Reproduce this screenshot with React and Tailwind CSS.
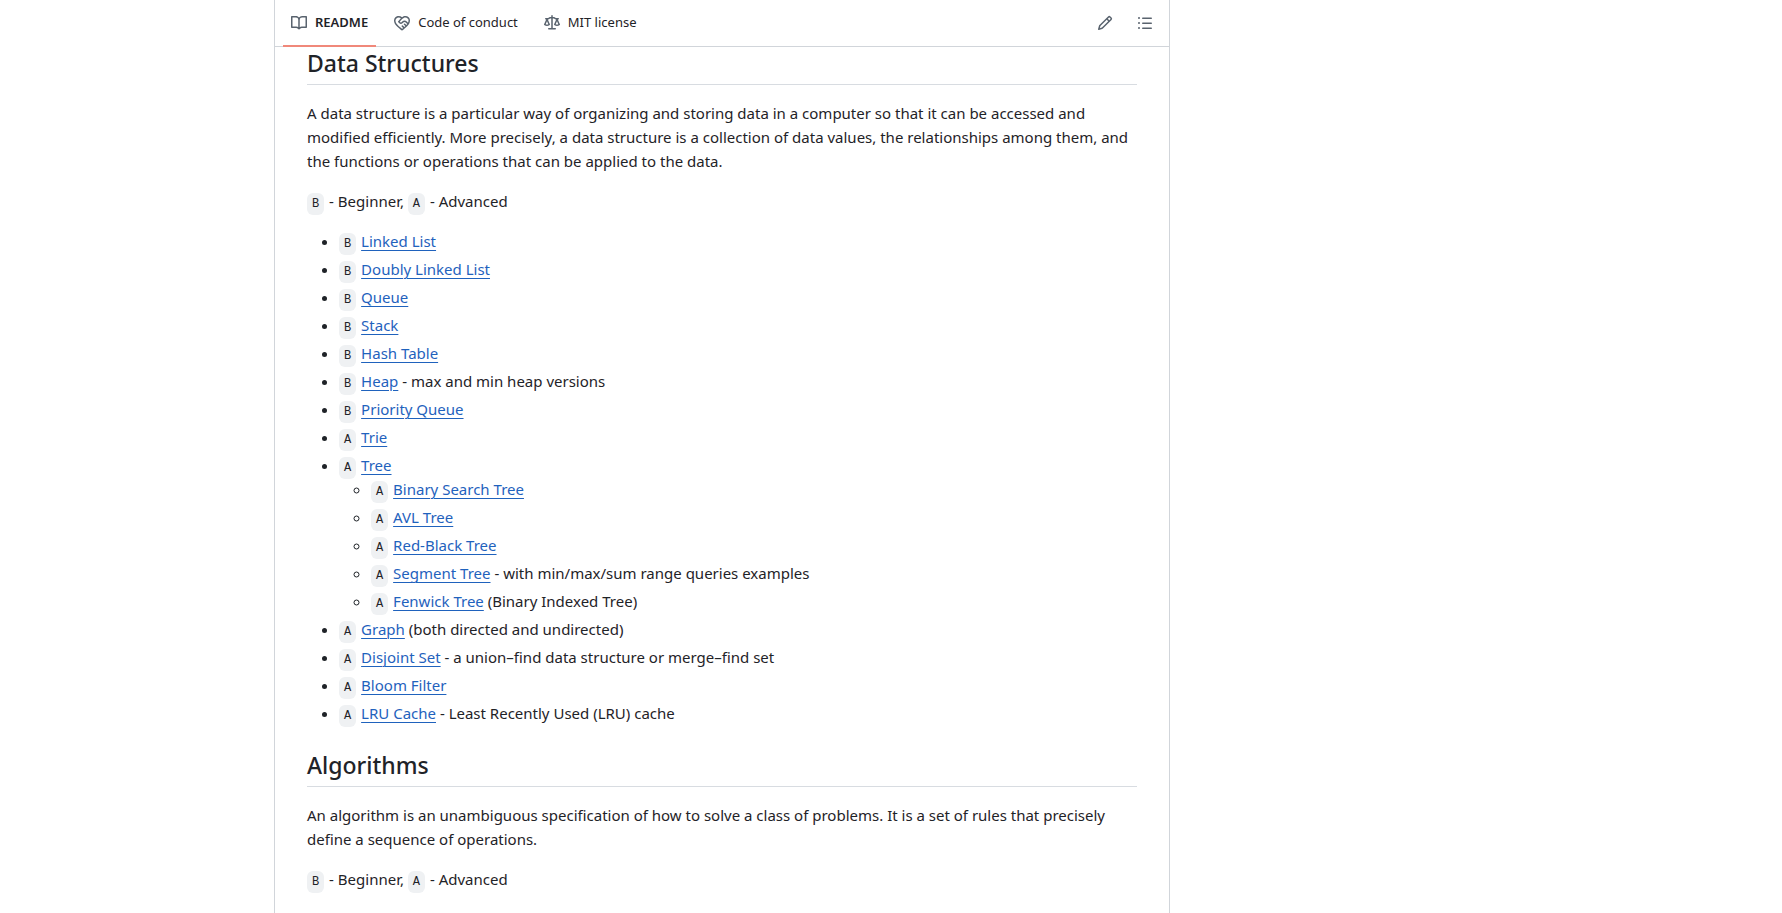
const tabs = [
  {
    id: "readme",
    label: "README",
    active: true,
    path: "M0 1.75A.75.75 0 0 1 .75 1h4.253c1.227 0 2.317.59 3 1.501A3.743 3.743 0 0 1 11.006 1h4.245a.75.75 0 0 1 .75.75v10.5a.75.75 0 0 1-.75.75h-4.507a2.25 2.25 0 0 0-1.591.659l-.622.621a.75.75 0 0 1-1.06 0l-.622-.621A2.25 2.25 0 0 0 5.258 13H.75a.75.75 0 0 1-.75-.75Zm7.251 10.324.004-5.073-.002-2.253A2.25 2.25 0 0 0 5.003 2.5H1.5v9h3.757a3.75 3.75 0 0 1 1.994.574ZM8.755 4.75l-.004 7.322a3.752 3.752 0 0 1 1.992-.572H14.5v-9h-3.495a2.25 2.25 0 0 0-2.25 2.25Z",
  },
  {
    id: "conduct",
    label: "Code of conduct",
    active: false,
    path: "M8.048 2.241c.964-.709 2.079-1.238 3.325-1.241a4.616 4.616 0 0 1 3.282 1.355c.41.408.757.86.996 1.428.238.568.348 1.206.347 1.968 0 2.193-1.505 4.254-3.081 5.862-1.496 1.526-3.213 2.796-4.249 3.563l-.22.163a.749.749 0 0 1-.895 0l-.221-.163c-1.036-.767-2.753-2.037-4.249-3.563C1.51 10.008.007 7.952.002 5.762a4.614 4.614 0 0 1 1.353-3.407C3.123.585 6.223.537 8.048 2.24Zm-1.153.983c-1.25-1.033-3.321-.967-4.48.191a3.115 3.115 0 0 0-.913 2.335c0 1.556 1.109 3.24 2.652 4.813C5.463 11.898 6.96 13.032 8 13.805c.353-.262.758-.565 1.191-.905l-1.326-1.223a.75.75 0 0 1 1.018-1.102l1.48 1.366c.328-.281.659-.577.984-.887L9.99 9.802a.75.75 0 1 1 1.019-1.103l1.384 1.28c.295-.329.566-.661.81-.995L12.92 8.7l-1.167-1.168c-.674-.671-1.78-.664-2.474.03-.268.269-.538.537-.802.797-.893.882-2.319.843-3.185-.032-.346-.35-.693-.697-1.043-1.047a.75.75 0 0 1-.04-1.016c.162-.191.336-.401.52-.623.62-.748 1.356-1.637 2.166-2.417Zm7.112 4.442c.313-.65.491-1.293.491-1.916v-.001c0-.614-.088-1.045-.23-1.385-.143-.339-.357-.633-.673-.949a3.111 3.111 0 0 0-2.218-.915c-1.092.003-2.165.627-3.226 1.602-.823.755-1.554 1.637-2.228 2.45l-.127.154.562.566a.755.755 0 0 0 1.066.02l.794-.79c1.258-1.258 3.312-1.31 4.594-.032.396.394.792.791 1.173 1.173Z",
  },
  {
    id: "license",
    label: "MIT license",
    active: false,
    path: "M8.75.75V2h.985c.304 0 .603.08.867.231l1.29.736c.038.022.08.033.124.033h2.234a.75.75 0 0 1 0 1.5h-.427l2.111 4.692a.75.75 0 0 1-.154.838l-.53-.53.529.531-.001.002-.002.002-.006.006-.006.005-.01.01-.045.04c-.21.176-.441.327-.686.45C14.556 10.78 13.88 11 13 11a4.498 4.498 0 0 1-2.023-.454 3.544 3.544 0 0 1-.686-.45l-.045-.04-.016-.015-.006-.006-.004-.004v-.001a.75.75 0 0 1-.154-.838L12.178 4.5h-.162c-.305 0-.604-.079-.868-.231l-1.29-.736a.245.245 0 0 0-.124-.033H8.75V13h2.5a.75.75 0 0 1 0 1.5h-6.5a.75.75 0 0 1 0-1.5h2.5V3.5h-.984a.245.245 0 0 0-.124.033l-1.289.737c-.265.15-.564.23-.869.23h-.162l2.112 4.692a.75.75 0 0 1-.154.838l-.53-.53.529.531-.001.002-.002.002-.006.006-.016.015-.045.04c-.21.176-.441.327-.686.45C4.556 10.78 3.88 11 3 11a4.498 4.498 0 0 1-2.023-.454 3.544 3.544 0 0 1-.686-.45l-.045-.04-.016-.015-.006-.006-.004-.004v-.001a.75.75 0 0 1-.154-.838L2.178 4.5H1.75a.75.75 0 0 1 0-1.5h2.234a.249.249 0 0 0 .125-.033l1.288-.737c.265-.15.564-.23.869-.23h.984V.75a.75.75 0 0 1 1.5 0Zm2.945 8.477c.285.135.718.273 1.305.273s1.02-.138 1.305-.273L13 6.327Zm-10 0c.285.135.718.273 1.305.273s1.02-.138 1.305-.273L3 6.327Z",
  },
]

const pencilPath =
  "M11.013 1.427a1.75 1.75 0 0 1 2.474 0l1.086 1.086a1.75 1.75 0 0 1 0 2.474l-8.61 8.61c-.21.21-.47.364-.756.445l-3.251.93a.75.75 0 0 1-.927-.928l.929-3.25c.081-.286.235-.547.445-.758l8.61-8.61Zm.176 4.823L9.75 4.81l-6.286 6.287a.253.253 0 0 0-.064.108l-.558 1.953 1.953-.558a.253.253 0 0 0 .108-.064Zm1.238-3.763a.25.25 0 0 0-.354 0L10.811 3.75l1.439 1.44 1.263-1.263a.25.25 0 0 0 0-.354Z"

const listPath =
  "M5.75 2.5h8.5a.75.75 0 0 1 0 1.5h-8.5a.75.75 0 0 1 0-1.5Zm0 5h8.5a.75.75 0 0 1 0 1.5h-8.5a.75.75 0 0 1 0-1.5Zm0 5h8.5a.75.75 0 0 1 0 1.5h-8.5a.75.75 0 0 1 0-1.5ZM2 14a1 1 0 1 1 0-2 1 1 0 0 1 0 2Zm1-6a1 1 0 1 1-2 0 1 1 0 0 1 2 0ZM2 4a1 1 0 1 1 0-2 1 1 0 0 1 0 2Z"

const dataStructures = [
  { level: "B", name: "Linked List" },
  { level: "B", name: "Doubly Linked List" },
  { level: "B", name: "Queue" },
  { level: "B", name: "Stack" },
  { level: "B", name: "Hash Table" },
  { level: "B", name: "Heap", note: "- max and min heap versions" },
  { level: "B", name: "Priority Queue" },
  { level: "A", name: "Trie" },
  {
    level: "A",
    name: "Tree",
    children: [
      { level: "A", name: "Binary Search Tree" },
      { level: "A", name: "AVL Tree" },
      { level: "A", name: "Red-Black Tree" },
      {
        level: "A",
        name: "Segment Tree",
        note: "- with min/max/sum range queries examples",
      },
      { level: "A", name: "Fenwick Tree", note: "(Binary Indexed Tree)" },
    ],
  },
  { level: "A", name: "Graph", note: "(both directed and undirected)" },
  {
    level: "A",
    name: "Disjoint Set",
    note: "- a union–find data structure or merge–find set",
  },
  { level: "A", name: "Bloom Filter" },
  { level: "A", name: "LRU Cache", note: "- Least Recently Used (LRU) cache" },
]

export default function App() {
  return (
    <div className="min-h-screen bg-white font-['Segoe_UI','Noto_Sans',sans-serif] text-[#1f2328]">
      <div className="mx-auto flex max-w-[1282px] px-6">
        <main className="min-h-screen min-w-0 flex-1 border-x border-[#d1d5da]">
          {/* TABS */}
          <header className="flex h-[47px] items-center justify-between border-b border-[#d1d5da] px-2">
            <nav className="flex h-full gap-2.5">
              {tabs.map((tab) => (
                <Tab key={tab.id} tab={tab} />
              ))}
            </nav>
            <div className="flex gap-2">
              <IconButton label="Edit file" path={pencilPath} />
              <IconButton label="Outline" path={listPath} />
            </div>
          </header>

          {/* README BODY */}
          <article className="px-8 text-[15px] leading-6">
            <Heading>Data Structures</Heading>
            <p className="mb-4">
              A data structure is a particular way of organizing and storing
              data in a computer so that it can be accessed and modified
              efficiently. More precisely, a data structure is a collection of
              data values, the relationships among them, and the functions or
              operations that can be applied to the data.
            </p>
            <Legend />
            <TopicList items={dataStructures} />

            <div className="mt-6">
              <Heading>Algorithms</Heading>
            </div>
            <p className="mb-4">
              An algorithm is an unambiguous specification of how to solve a
              class of problems. It is a set of rules that precisely define a
              sequence of operations.
            </p>
            <Legend />
          </article>
        </main>

        {/* SIDEBAR SPACE */}
        <aside className="hidden w-[338px] shrink-0 lg:block" />
      </div>
    </div>
  )
}

function Icon({ path }) {
  return (
    <svg
      viewBox="0 0 16 16"
      className="h-4 w-4 shrink-0 fill-[#59636e]"
      aria-hidden="true"
    >
      <path d={path} />
    </svg>
  )
}

function Tab({ tab }) {
  return (
    <a
      href={`#${tab.id}`}
      className={`-mb-px flex items-center gap-2 border-b-2 px-2 text-[13px] ${
        tab.active ? "border-[#f0887a] font-semibold" : "border-transparent"
      }`}
    >
      <Icon path={tab.path} />
      {tab.label}
    </a>
  )
}

function IconButton({ label, path }) {
  return (
    <button
      type="button"
      aria-label={label}
      className="flex h-8 w-8 items-center justify-center rounded-md"
    >
      <Icon path={path} />
    </button>
  )
}

function Heading({ children }) {
  return (
    <h2 className="mb-4 border-b border-[#d8dce1] pb-[5px] text-[23px] leading-8 font-medium">
      {children}
    </h2>
  )
}

function Level({ children }) {
  return (
    <code className="mr-px rounded-md bg-[#eff1f3] px-[5px] py-1 font-['Liberation_Mono',monospace] text-xs">
      {children}
    </code>
  )
}

function Legend() {
  return (
    <p className="mb-4">
      <Level>B</Level> - Beginner, <Level>A</Level> - Advanced
    </p>
  )
}

function TopicList({ items, nested }) {
  return (
    <ul className={`space-y-1 pl-8 ${nested ? "list-[circle]" : "list-disc"}`}>
      {items.map((item) => (
        <li key={item.name}>
          <Level>{item.level}</Level>{" "}
          <a
            href="#topic"
            className="text-[#1f62bd] underline decoration-1 underline-offset-[3px]"
          >
            {item.name}
          </a>
          {item.note && ` ${item.note}`}
          {item.children && <TopicList items={item.children} nested />}
        </li>
      ))}
    </ul>
  )
}
